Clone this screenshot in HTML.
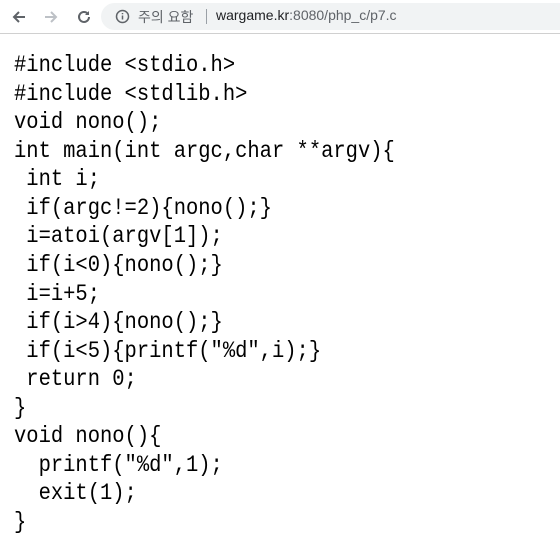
<!DOCTYPE html>
<html><head><meta charset="utf-8"><style>
body{margin:0;width:560px;height:541px;background:#fff;overflow:hidden;position:relative}
.bar{position:absolute;left:0;top:0;width:560px;height:33px;background:#fff;border-bottom:1px solid #d0d0d0}
.url{position:absolute;left:101px;top:3px;width:480px;height:27px;border-radius:14px;background:#f1f3f4}
.t{position:absolute;top:7px;font-family:"Liberation Sans","Noto Sans CJK KR",sans-serif;font-size:14px;color:#5f6368;white-space:nowrap}
pre{position:absolute;left:14px;top:51px;margin:0;font-family:"Liberation Mono",monospace;font-size:23px;line-height:28.56px;color:#000;transform:scaleX(0.89);transform-origin:0 0}
</style></head><body>
<div class="bar">
<svg style="position:absolute;left:10px;top:8px" width="18" height="18" viewBox="0 0 18 18"><path d="M15 9H4M9 4L4 9l5 5" stroke="#5f6368" stroke-width="2" fill="none"/></svg>
<svg style="position:absolute;left:42px;top:8px" width="18" height="18" viewBox="0 0 18 18"><path d="M3 9h11M9 4l5 5-5 5" stroke="#bdc1c6" stroke-width="2" fill="none"/></svg>
<svg style="position:absolute;left:75px;top:8px" width="18" height="18" viewBox="0 0 18 18"><path d="M14 9a5 5 0 1 1-1.5-3.6" stroke="#5f6368" stroke-width="2" fill="none"/><path d="M14 3v4h-4z" fill="#5f6368"/></svg>
<div class="url"></div>
<svg style="position:absolute;left:115px;top:9px" width="15" height="15" viewBox="0 0 15 15"><circle cx="7.5" cy="7.5" r="6" stroke="#5f6368" stroke-width="1.5" fill="none"/><path d="M7.5 6.5v4M7.5 4v1.3" stroke="#5f6368" stroke-width="1.5"/></svg>
<span class="t" style="left:138px">주의 요함</span>
<span style="position:absolute;left:206px;top:9px;width:1px;height:15px;background:#9aa0a6"></span>
<span class="t" style="left:216px"><span style="color:#202124">wargame.kr</span>:8080/php_c/p7.c</span>
</div>
<pre>#include &lt;stdio.h&gt;
#include &lt;stdlib.h&gt;
void nono();
int main(int argc,char **argv){
 int i;
 if(argc!=2){nono();}
 i=atoi(argv[1]);
 if(i&lt;0){nono();}
 i=i+5;
 if(i&gt;4){nono();}
 if(i&lt;5){printf("%d",i);}
 return 0;
}
void nono(){
  printf("%d",1);
  exit(1);
}</pre>
</body></html>
